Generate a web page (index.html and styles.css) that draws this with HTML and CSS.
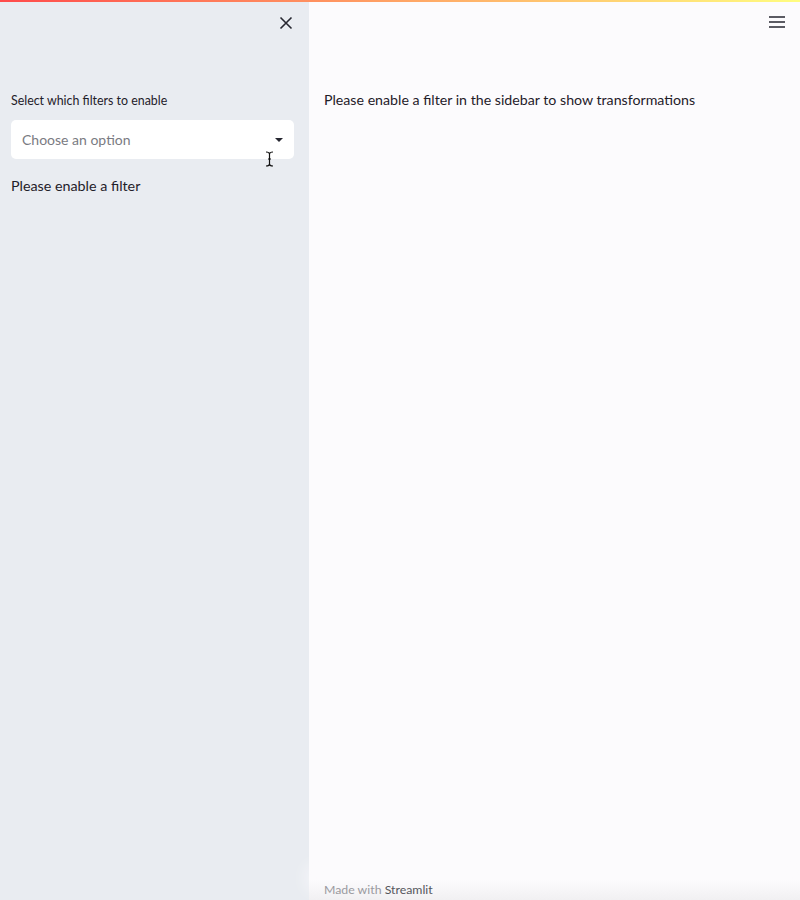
FILE: index.html
```html
<!DOCTYPE html>
<html>
  <head>
    <meta charset="UTF-8" />
    <link rel="stylesheet" href="styles.css">
  </head>
  <body>
    <div class="decoration"></div>
    <div class="app">
      <aside class="sidebar">
        <div class="sidebar-top">
          <button class="icon-btn" aria-label="Close sidebar">
            <svg width="14" height="14" viewBox="0 0 14 14">
              <path d="M1.5 1.5 L12.5 12.5 M12.5 1.5 L1.5 12.5" stroke="#262730" stroke-width="1.6" fill="none" />
            </svg>
          </button>
        </div>
        <div class="sidebar-content">
          <label class="widget-label">Select which filters to enable</label>
          <div class="select">
            <span class="placeholder">Choose an option</span>
            <svg class="caret" width="10" height="6" viewBox="0 0 10 6">
              <path d="M1 1 L9 1 L5 5 Z" fill="#262730" />
            </svg>
            <svg class="cursor" width="9" height="16" viewBox="0 0 9 16">
              <path d="M1 1 Q4.5 1 4.5 3 L4.5 13 Q4.5 15 1 15 M8 1 Q4.5 1 4.5 3 M4.5 13 Q4.5 15 8 15 M3 8 L6 8" stroke="#111" stroke-width="1.2" fill="none" />
            </svg>
          </div>
          <p class="sidebar-text">Please enable a filter</p>
        </div>
      </aside>
      <main class="main">
        <header class="main-top">
          <button class="icon-btn" aria-label="Menu">
            <svg width="16" height="12" viewBox="0 0 16 12">
              <path d="M0 1 H16 M0 6 H16 M0 11 H16" stroke="#262730" stroke-width="1.6" fill="none" />
            </svg>
          </button>
        </header>
        <div class="main-content">
          <p>Please enable a filter in the sidebar to show transformations</p>
        </div>
        <footer class="footer">
          Made with <span class="brand">Streamlit</span>
        </footer>
      </main>
    </div>
  </body>
</html>
```

FILE: styles.css
```css
html,
body {
  margin: 0;
  height: 100%;
}
body {
  font-family: Lato, "Open Sans", sans-serif;
  color: #1f2029;
  background: #fcfbfd;
  overflow: hidden;
}
.decoration {
  position: absolute;
  top: 0;
  left: 0;
  right: 0;
  height: 2px;
  background: linear-gradient(90deg, #ff4b4b, #fffd80);
  z-index: 2;
}
.app {
  display: flex;
  height: 100%;
}
.sidebar {
  width: 309px;
  flex-shrink: 0;
  background: #e9ecf1;
  display: flex;
  flex-direction: column;
}
.sidebar-top {
  display: flex;
  justify-content: flex-end;
  padding: 14px 14px 0 0;
}
.icon-btn {
  background: none;
  border: none;
  padding: 0;
  width: 18px;
  height: 18px;
  display: flex;
  align-items: center;
  justify-content: center;
  cursor: pointer;
}
.sidebar-content {
  padding: 59px 15px 0 11px;
}
.widget-label {
  display: block;
  font-size: 12.4px;
  line-height: 20px;
  margin-bottom: 9px;
}
.select {
  position: relative;
  height: 39px;
  background: #fff;
  border-radius: 5px;
  display: flex;
  align-items: center;
  padding: 0 10px 0 11px;
}
.placeholder {
  flex: 1;
  font-size: 14px;
  color: #7a7b82;
}
.caret {
  margin-top: 1px;
}
.cursor {
  position: absolute;
  left: 254px;
  top: 31px;
}
.sidebar-text {
  font-size: 14.3px;
  line-height: 22px;
  margin: 16px 0 0;
}
.main {
  flex: 1;
  display: flex;
  flex-direction: column;
  position: relative;
}
.main-top {
  display: flex;
  justify-content: flex-end;
  padding: 13px 14px 0 0;
}
.main-content {
  flex: 1;
  padding: 58px 15px 0 15px;
  font-size: 14.2px;
  line-height: 22px;
}
.main-content p {
  margin: 0;
}
.footer {
  font-size: 12.3px;
  line-height: 20px;
  color: #9a9aa0;
  padding: 0 15px;
  height: 20px;
  background: linear-gradient(180deg, #fcfbfd, #f1f0f2);
  box-shadow: 0 -12px 18px #fcfbfd;
}
.brand {
  color: #55565d;
}
```
